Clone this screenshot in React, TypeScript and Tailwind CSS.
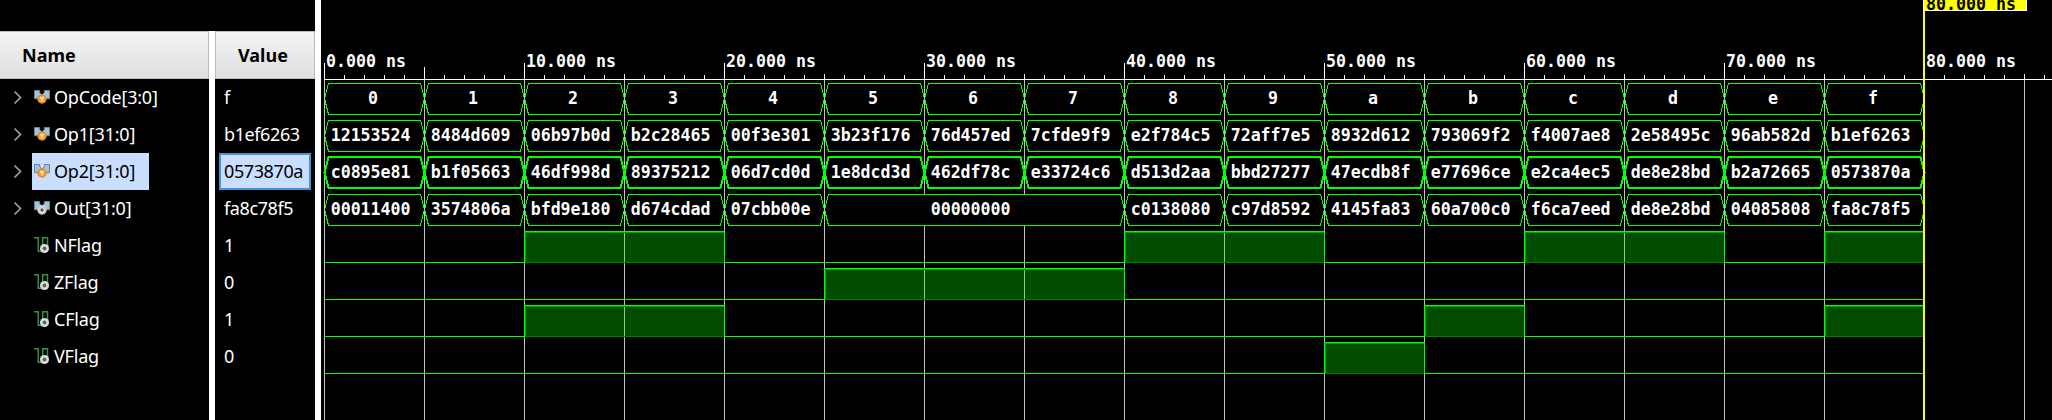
import React from "react";

const BUSES: { name: string; value: string; output?: boolean; selected?: boolean; cells: [string, number][] }[] = [
  {
    name: "OpCode[3:0]",
    value: "f",
    cells: "0 1 2 3 4 5 6 7 8 9 a b c d e f".split(" ").map((t) => [t, 1]),
  },
  {
    name: "Op1[31:0]",
    value: "b1ef6263",
    cells: "12153524 8484d609 06b97b0d b2c28465 00f3e301 3b23f176 76d457ed 7cfde9f9 e2f784c5 72aff7e5 8932d612 793069f2 f4007ae8 2e58495c 96ab582d b1ef6263"
      .split(" ")
      .map((t) => [t, 1]),
  },
  {
    name: "Op2[31:0]",
    value: "0573870a",
    selected: true,
    cells: "c0895e81 b1f05663 46df998d 89375212 06d7cd0d 1e8dcd3d 462df78c e33724c6 d513d2aa bbd27277 47ecdb8f e77696ce e2ca4ec5 de8e28bd b2a72665 0573870a"
      .split(" ")
      .map((t) => [t, 1]),
  },
  {
    name: "Out[31:0]",
    value: "fa8c78f5",
    output: true,
    cells: [
      ["00011400", 1],
      ["3574806a", 1],
      ["bfd9e180", 1],
      ["d674cdad", 1],
      ["07cbb00e", 1],
      ["00000000", 3],
      ["c0138080", 1],
      ["c97d8592", 1],
      ["4145fa83", 1],
      ["60a700c0", 1],
      ["f6ca7eed", 1],
      ["de8e28bd", 1],
      ["04085808", 1],
      ["fa8c78f5", 1],
    ],
  },
];

const FLAGS = [
  { name: "NFlag", value: "1", bits: "0011000011001101" },
  { name: "ZFlag", value: "0", bits: "0000011100000000" },
  { name: "CFlag", value: "1", bits: "0011000000010001" },
  { name: "VFlag", value: "0", bits: "0000000000100000" },
];

const TIMES = [0, 10, 20, 30, 40, 50, 60, 70, 80];

function BusIcon({ output }: { output?: boolean }) {
  return (
    <svg width="16" height="17" viewBox="0 0 16 17" className="shrink-0">
      <path d="M.5 1.5h5.2v2.2L8 6l2.3-2.3V1.5h5.2v8.2H.5z" fill="#9cc5dd" stroke="#73838c" />
      <circle cx="8" cy="10" r="4" fill={output ? "#8d8d8d" : "#f9a03a"} stroke={output ? "#d8d8d8" : "#e8891c"} strokeWidth="1.4" />
      {output ? (
        <circle cx="8" cy="10" r="2.4" fill="#5c5c5c" stroke="#e4e4e4" strokeWidth="1.4" />
      ) : (
        <path d="M6.4 8 8 10.2 9.6 8M8 10v2.2" fill="none" stroke="#fff4e2" strokeWidth="1.3" />
      )}
    </svg>
  );
}

function ScalarIcon() {
  return (
    <svg width="16" height="17" viewBox="0 0 16 17" className="shrink-0">
      <path d="M0 .7h4.3v13.6h4.4V.7h4.8v13" fill="none" stroke="#2f9444" strokeWidth="1.5" />
      <circle cx="10.5" cy="11.5" r="4.5" fill="#dcdcdc" />
      <circle cx="10.5" cy="11.5" r="1.9" fill="#606060" />
    </svg>
  );
}

function Mono({ x, y, fill = "#fff", anchor = "start", children }: { x: number; y: number; fill?: string; anchor?: "start" | "middle"; children: React.ReactNode }) {
  return (
    <text
      transform={`translate(${x} ${y}) scale(1 1.08)`}
      textAnchor={anchor}
      fill={fill}
      className="font-['DejaVu_Sans_Mono',monospace] text-[16.6px] font-bold"
    >
      {children}
    </text>
  );
}

function Cell({ x, width, thick, label }: { x: number; width: number; thick?: boolean; label: string }) {
  const r = x + width;
  const top = thick ? 4 : 4.5;
  const bottom = thick ? 35 : 35.5;
  return (
    <g>
      <polygon
        points={`${x + 0.5},19.5 ${x + 4.5},${top} ${r - 3.5},${top} ${r + 0.5},19.5 ${r - 3.5},${bottom} ${x + 4.5},${bottom}`}
        fill="#000"
        stroke="#00ff00"
        strokeWidth={thick ? 2 : 1}
        shapeRendering="crispEdges"
      />
      {!thick && <rect x={x} y="17" width="1" height="5" fill="#c0c0c0" />}
      <Mono x={x + width / 2 - (label.length > 1 ? 3.4 : 0.9)} y={25} anchor="middle">
        {label}
      </Mono>
    </g>
  );
}

function BusWave({ cells, thick }: { cells: [string, number][]; thick?: boolean }) {
  let at = 0;
  return (
    <svg width="1604" height="37" className="block overflow-visible">
      {cells.map(([label, span], i) => {
        const x = at * 100;
        at += span;
        return <Cell key={i} x={x} width={span * 100} thick={thick} label={label} />;
      })}
    </svg>
  );
}

function FlagWave({ bits }: { bits: string }) {
  const runs = [...bits.matchAll(/1+/g)].map((m) => [m.index! * 100, m[0].length * 100]);
  const lows = [...bits.matchAll(/0+/g)].map((m) => [m.index! * 100, m[0].length * 100]);
  return (
    <svg width="1604" height="37" className="block" shapeRendering="crispEdges">
      {lows.map(([x, w]) => (
        <rect key={x} x={x} y="35" width={w + 1} height="1" fill="#00ff00" />
      ))}
      {runs.map(([x, w]) => (
        <g key={x}>
          <rect x={x} y="4" width={w + 1} height="32" fill="#00ff00" fillOpacity=".3" />
          <path d={`M${x + 1.5} 35V5.5H${x + w}`} stroke="#00a000" fill="none" />
          <path d={`M${x + 1} 35.5H${x + w}`} stroke="#008000" />
          <path d={`M${x + 0.5} 36V4.5H${x + w + 0.5}V36`} stroke="#00ff00" fill="none" />
        </g>
      ))}
    </svg>
  );
}

function Ruler() {
  return (
    <svg width="1728" height="80" className="block shrink-0" shapeRendering="crispEdges">
      {Array.from({ length: 87 }, (_, i) => {
        const top = i % 10 === 0 ? 63 : i === 5 ? 67 : i % 5 === 0 ? 74 : 75;
        return <rect key={i} x={i * 20} y={top} width="1" height={80 - top} fill="#fff" />;
      })}
      <rect x="0" y="79" width="1728" height="1" fill="#fff" />
      {TIMES.map((t) => (
        <Mono key={t} x={t * 20 + 2} y={67}>
          {t}.000 ns
        </Mono>
      ))}
    </svg>
  );
}

export default function App() {
  return (
    <div className="flex h-[420px] w-[2052px] overflow-hidden bg-black font-['Noto_Sans',sans-serif] text-[18px] text-white">
      <div className="w-[209px] shrink-0 pt-[31px]">
        <div className="flex h-12 items-center border-y border-r border-[#bdbdbd] bg-linear-to-b from-[#f4f4f4] to-[#dfdfe1] pl-[22px] font-bold text-black">
          Name
        </div>
        {BUSES.map((b) => (
          <div key={b.name} className="flex h-[37px] items-center">
            <svg width="32" height="17" viewBox="0 0 32 17" fill="none" stroke="#a0a0a0" strokeWidth="1.7" className="shrink-0">
              <path d="m14.5 2.5 6 6-6 6" />
            </svg>
            <div
              className={`flex h-[37px] items-center gap-1 pl-0.5 tracking-[-0.2px] ${b.selected ? "w-[117px] bg-[#cadeff] text-black" : ""}`}
            >
              <BusIcon output={b.output} />
              <span>{b.name}</span>
            </div>
          </div>
        ))}
        {FLAGS.map((f) => (
          <div key={f.name} className="flex h-[37px] items-center gap-1 pl-[34px] tracking-[-0.2px]">
            <ScalarIcon />
            <span>{f.name}</span>
          </div>
        ))}
      </div>
      <div className="mt-[31px] w-1.5 shrink-0 bg-white" />
      <div className="w-[100px] shrink-0 pt-[31px]">
        <div className="flex h-12 items-center border border-[#bdbdbd] bg-linear-to-b from-[#f4f4f4] to-[#dfdfe1] pl-[22px] font-bold text-black">
          Value
        </div>
        {[...BUSES, ...FLAGS].map((s) => (
          <div
            key={s.name}
            className={`flex h-[37px] items-center tracking-[-0.4px] ${
              "selected" in s && s.selected
                ? "ml-1 w-[92px] border-2 border-[#4296d8] bg-[#cadeff] pl-[3px] text-black"
                : "pl-[9px]"
            }`}
          >
            {s.value}
          </div>
        ))}
      </div>
      <div className="w-1.5 shrink-0 bg-white" />
      <div className="relative ml-[3px] h-full min-w-0 flex-1">
        <svg width="1728" height="340" className="absolute top-20 left-0" shapeRendering="crispEdges">
          {Array.from({ length: 18 }, (_, i) => (
            <rect key={i} x={i * 100} y="0" width="1" height="340" fill="#c0c0c0" />
          ))}
        </svg>
        <div className="relative flex flex-col">
          <Ruler />
          <div className="-mt-px flex flex-col">
            {BUSES.map((b) => (
              <BusWave key={b.name} cells={b.cells} thick={b.selected} />
            ))}
            {FLAGS.map((f) => (
              <FlagWave key={f.name} bits={f.bits} />
            ))}
          </div>
        </div>
        <div className="absolute top-0 left-[1599px] h-full w-0.5 bg-[#ffff00]" />
        <div className="absolute top-0 left-[1599px] h-[11px] w-[104px] overflow-hidden border-x border-b border-white bg-[#ffff00]">
          <svg width="102" height="10" className="block">
            <Mono x={2} y={9.5} fill="#000">
              80.000 ns
            </Mono>
          </svg>
        </div>
      </div>
    </div>
  );
}
